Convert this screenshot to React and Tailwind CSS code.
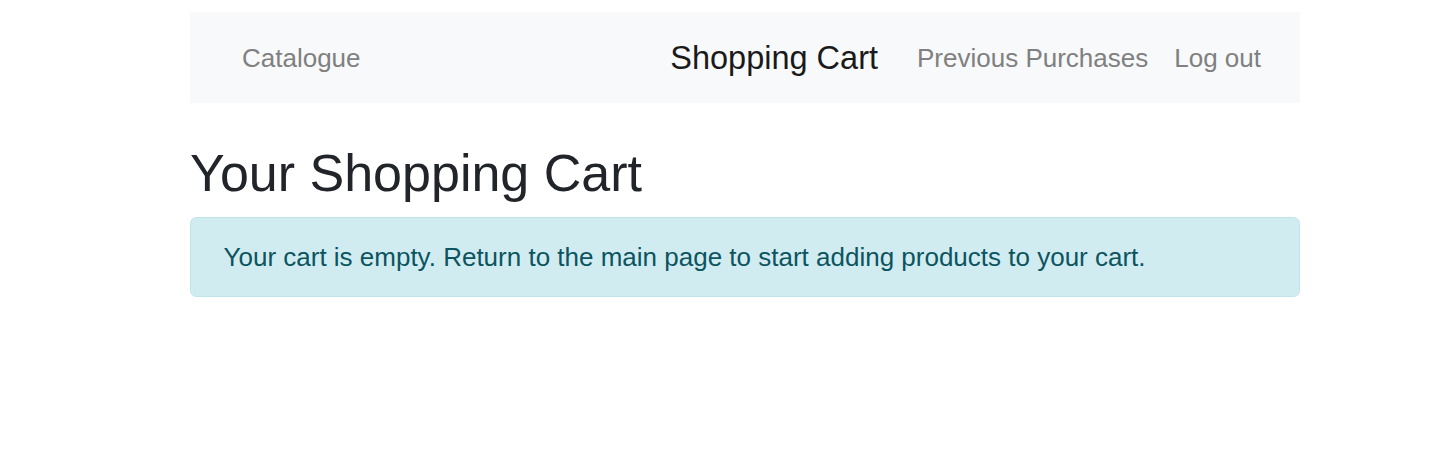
export default function App() {
  return (
    <div className="min-h-[464px] bg-white" style={{ fontFamily: '"Liberation Sans", Arial, sans-serif' }}>
      <div className="ml-[190px] w-[1110px] pt-[12px]">
        <nav className="flex h-[91px] items-center bg-[#f8f9fa] pl-[52px] pr-[39px] pt-[1px]">
          <a className="text-[26px] leading-[39px] text-[#808080]">Catalogue</a>
          <div className="ml-auto flex items-center">
            <a className="mr-[39px] text-[32.5px] leading-[39px] text-[#1a1a1a]">Shopping Cart</a>
            <a className="mr-[26px] text-[26px] leading-[39px] text-[#808080]">Previous Purchases</a>
            <a className="text-[26px] leading-[39px] text-[#808080]">Log out</a>
          </div>
        </nav>
        <h2 className="mt-[39px] mb-[13px] text-[52px] leading-[1.2] font-normal text-[#212529]">Your Shopping Cart</h2>
        <div className="rounded-[6.5px] border border-[#bee5eb] bg-[#d1ecf1] px-[32.5px] pt-[20px] pb-[19px] text-[26px] leading-[39px] text-[#0c5460]">
          Your cart is empty. Return to the main page to start adding products to your cart.
        </div>
      </div>
    </div>
  );
}
